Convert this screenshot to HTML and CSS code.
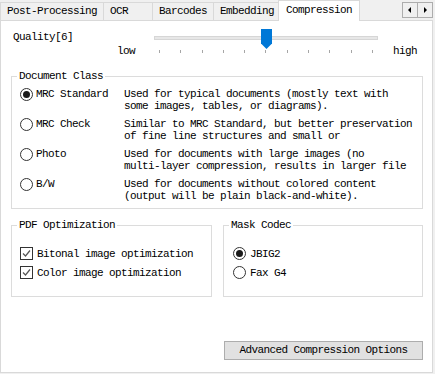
FILE: index.html
```html
<!DOCTYPE html>
<html>
<head>
<meta charset="utf-8">
<link rel="stylesheet" href="styles.css">
</head>
<body>
<div class="window">
  <div class="tabbar">
    <div class="tab first">Post-Processing</div>
    <div class="tab ocr">OCR</div>
    <div class="tab">Barcodes</div>
    <div class="tab">Embedding</div>
    <div class="tab active">Compression</div>
    <div class="scroll">
      <span class="sbtn"><svg width="14" height="14" viewBox="0 0 14 14"><polygon points="8,4 8,10 5,7" fill="#000"/></svg></span>
      <span class="sbtn"><svg width="14" height="14" viewBox="0 0 14 14"><polygon points="6,4 6,10 9,7" fill="#000"/></svg></span>
    </div>
  </div>
  <div class="panel">
    <div class="quality">
      <div class="q-label">Quality[6]</div>
      <div class="track-cell">
        <div class="track"></div>
        <svg class="thumb" width="11" height="20" viewBox="0 0 11 20"><path d="M0 0H11V14.5L5.5 20L0 14.5Z" fill="#0078d7"/></svg>
      </div>
      <div></div>
      <div class="low">low</div>
      <div class="ticks"><i></i><i></i><i></i><i></i><i></i><i></i><i></i><i></i><i></i><i></i><i></i></div>
      <div class="high">high</div>
    </div>

    <fieldset class="group doc">
      <legend>Document Class</legend>
      <div class="options">
        <div class="opt"><span class="radio checked"></span><span>MRC Standard</span></div>
        <div class="desc">Used for typical documents (mostly text with<br>some images, tables, or diagrams).</div>
        <div class="opt"><span class="radio"></span><span>MRC Check</span></div>
        <div class="desc">Similar to MRC Standard, but better preservation<br>of fine line structures and small or</div>
        <div class="opt"><span class="radio"></span><span>Photo</span></div>
        <div class="desc">Used for documents with large images (no<br>multi-layer compression, results in larger file</div>
        <div class="opt"><span class="radio"></span><span>B/W</span></div>
        <div class="desc">Used for documents without colored content<br>(output will be plain black-and-white).</div>
      </div>
    </fieldset>

    <div class="lower">
      <fieldset class="group small">
        <legend>PDF Optimization</legend>
        <div class="list">
          <div class="item"><span class="check"><svg width="11" height="11" viewBox="0 0 11 11"><path d="M2 5.5L4.5 8L9 2.5" fill="none" stroke="#555" stroke-width="1.2"/></svg></span><span>Bitonal image optimization</span></div>
          <div class="item"><span class="check"><svg width="11" height="11" viewBox="0 0 11 11"><path d="M2 5.5L4.5 8L9 2.5" fill="none" stroke="#555" stroke-width="1.2"/></svg></span><span>Color image optimization</span></div>
        </div>
      </fieldset>
      <fieldset class="group small mask">
        <legend>Mask Codec</legend>
        <div class="list">
          <div class="item"><span class="radio checked"></span><span>JBIG2</span></div>
          <div class="item"><span class="radio"></span><span>Fax G4</span></div>
        </div>
      </fieldset>
    </div>

    <div class="actions">
      <button class="btn">Advanced Compression Options</button>
    </div>
  </div>
</div>
</body>
</html>
```

FILE: styles.css
```css
* { box-sizing: border-box; }
html, body {
  margin: 0;
  padding: 0;
  background: #f0f0f0;
  width: 435px;
  height: 374px;
  overflow: hidden;
}
body {
  font-family: "Liberation Mono", "Noto Sans CJK SC", monospace;
  font-size: 11px;
  letter-spacing: -0.6px;
  line-height: 12px;
  color: #000;
}
.window { width: 435px; }

/* tabs */
.tabbar {
  display: flex;
  align-items: flex-end;
  height: 20px;
}
.tab {
  height: 18px;
  border: 1px solid #d9d9d9;
  border-bottom: none;
  margin-left: -1px;
  padding: 0 6px;
  line-height: 17px;
  background: #f0f0f0;
  white-space: nowrap;
}
.tab.first { margin-left: 0; }
.tab.ocr { width: 50px; }
.tab.active {
  position: relative;
  z-index: 1;
  height: 21px;
  margin-bottom: -1px;
  margin-left: -3px;
  margin-right: -2px;
  padding: 0 7px;
  background: #fff;
  line-height: 19px;
}
.scroll {
  display: flex;
  margin-left: auto;
  margin-right: 2px;
  align-self: flex-start;
  margin-top: 2px;
}
.sbtn {
  width: 16px;
  height: 16px;
  border: 1px solid #adadad;
  background: #f0f0f0;
  display: flex;
  align-items: center;
  justify-content: center;
}
.sbtn + .sbtn { margin-left: -1px; }

/* panel */
.panel {
  width: 433px;
  height: 353px;
  border: 1px solid #d9d9d9;
  background: #fff;
  padding-top: 8px;
}

/* quality slider */
.quality {
  display: grid;
  grid-template-columns: 153px 224px 1fr;
  grid-template-rows: 16px 12px;
}
.q-label { padding-left: 12px; margin-top: 2px; }
.track-cell { position: relative; }
.track {
  margin-top: 7px;
  height: 4px;
  background: #e7e7e7;
  border: 1px solid #d6d6d6;
}
.thumb {
  position: absolute;
  left: 107px;
  top: 0;
}
.low { text-align: right; padding-right: 19px; }
.high { padding-left: 15px; }
.ticks {
  display: flex;
  justify-content: space-between;
  padding: 0 5px;
  align-items: flex-start;
}
.ticks i {
  width: 1px;
  height: 3px;
  margin-top: 5px;
  background: #a6a6a6;
}

/* group boxes */
.group {
  margin: 0;
  padding: 0;
  min-width: 0;
  border: 1px solid #dcdcdc;
}
.group legend {
  margin-left: 5px;
  padding: 0 2px;
  line-height: 12px;
  height: 12px;
}
.doc {
  margin: 13px 0 0 10px;
  width: 412px;
}
.options {
  display: grid;
  grid-template-columns: 104px 1fr;
  row-gap: 6px;
  padding: 6px 0 6px 8px;
}
.opt {
  display: flex;
  align-items: center;
  gap: 3px;
  height: 12px;
}
.desc { white-space: nowrap; }

.radio {
  flex: none;
  width: 13px;
  height: 13px;
  border: 1px solid #333;
  border-radius: 50%;
  background: #fff;
  display: flex;
  align-items: center;
  justify-content: center;
}
.radio.checked::after {
  content: "";
  width: 7px;
  height: 7px;
  border-radius: 50%;
  background: #1a1a1a;
}
.check {
  flex: none;
  width: 13px;
  height: 13px;
  border: 1px solid #333;
  background: #fff;
  display: flex;
  align-items: center;
  justify-content: center;
}

.lower {
  display: grid;
  grid-template-columns: 201px 200px;
  column-gap: 11px;
  margin: 10px 0 0 10px;
}
.list {
  display: flex;
  flex-direction: column;
  gap: 6px;
  padding: 16px 0 17px 8px;
}
.mask .list { padding-left: 9px; }
.item {
  display: flex;
  align-items: center;
  gap: 4px;
  height: 13px;
  white-space: nowrap;
}

.actions {
  display: flex;
  justify-content: flex-end;
  width: 412px;
  margin: 44px 0 0 10px;
}
.btn {
  width: 199px;
  height: 19px;
  padding: 0;
  border: 1px solid #adadad;
  background: #e1e1e1;
  font: inherit;
  letter-spacing: -0.6px;
  line-height: 17px;
  color: #000;
}
```
